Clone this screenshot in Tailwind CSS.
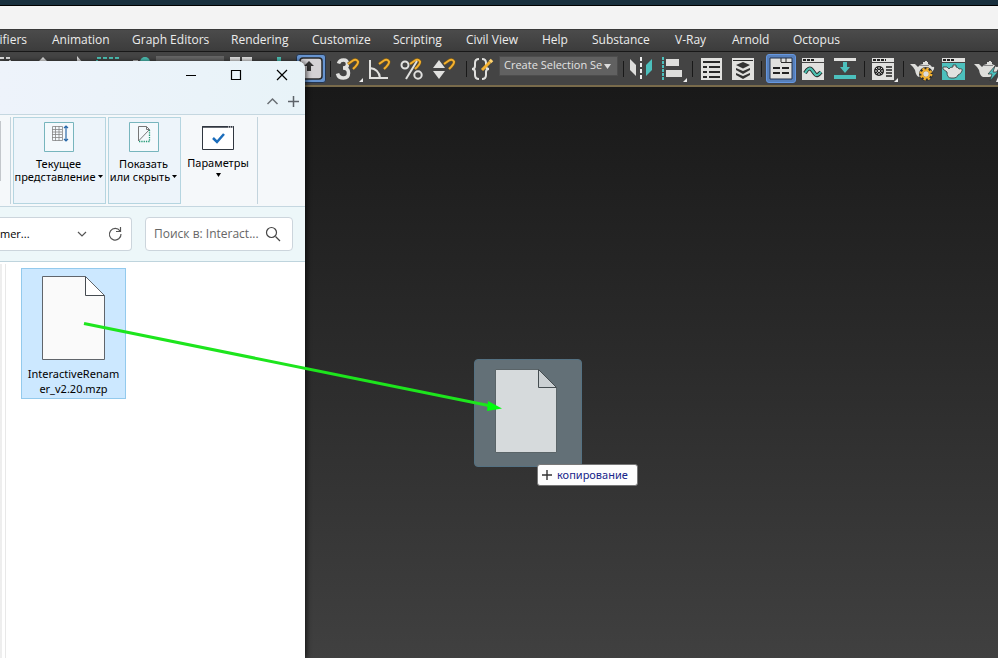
<!DOCTYPE html>
<html lang="ru">
<head>
<meta charset="utf-8">
<title>Interactive Renamer</title>
<script src="https://cdn.jsdelivr.net/npm/@tailwindcss/browser@4"></script>
</head>
<body class="relative flex h-screen flex-col overflow-hidden bg-[#2b2b2b] font-['Noto_Sans','Open_Sans',sans-serif] text-black">
<svg class="absolute size-0" aria-hidden="true">
  <defs>
    <g id="magnet" fill="none"><path d="M1 5 6 1.500Q9-.5 11 2.500Q11.500 5 6 10" stroke="#7a5a18" stroke-width="3"/><path d="M1 5 6 1.500Q9-.5 11 2.500Q11.500 5 6 10" stroke="#f3b02f" stroke-width="2"/></g>
    <g id="pot"><path d="M0 5h5l3 3q2-3 5-3V3h2V2h2v1h1v2q3 1 4 3 3-1 2 2-1 3-4 4-2 4-5 4H9q-3-1-4-7L3 8Z" fill="#dededb"/><path d="M9 6.500h10" stroke="#888"/></g>
  </defs>
</svg>
<header class="shrink-0">
  <div class="h-[6px] border-b border-black bg-[#19303e]"></div>
  <div class="h-[23px] bg-[#f3f3f3]"></div>
  <nav aria-label="Main menu" class="grid h-[23px] grid-cols-[52px_80px_99px_81px_81px_73px_76px_50px_83px_57px_61px_1fr] items-center overflow-hidden border-y border-t-[#393939] border-b-[#181818] bg-linear-to-b from-[#4b4b4b] to-[#3c3c3c] pb-[2px] font-['Open_Sans','Noto_Sans',sans-serif] text-[12px] leading-4 whitespace-nowrap text-[#ececec]">
    <button class="mr-[25px] flex justify-end">Modifiers</button>
    <button class="text-left">Animation</button>
    <button class="text-left">Graph Editors</button>
    <button class="text-left">Rendering</button>
    <button class="text-left">Customize</button>
    <button class="text-left">Scripting</button>
    <button class="text-left">Civil View</button>
    <button class="text-left">Help</button>
    <button class="text-left">Substance</button>
    <button class="text-left">V-Ray</button>
    <button class="text-left">Arnold</button>
    <button class="text-left">Octopus</button>
  </nav>
  <div role="toolbar" aria-label="Main toolbar" class="flex h-[35px] items-center overflow-hidden border-b-2 border-[#796b4b] bg-[#444] *:shrink-0">
    <svg class="h-[33px] w-[296px]" viewBox="0 0 296 33"><path d="M0 6h10v4" fill="none" stroke="#ddd" stroke-width="2" stroke-dasharray="4 2"/><path d="m38 10 5-5 5 5ZM77 4l6 7h-6Z" fill="#ddd"/><path d="M97 12V6h21v6" fill="none" stroke="#4cc0b4" stroke-width="2" stroke-dasharray="4 2"/><circle cx="145" cy="10" r="5" fill="#4cc0b4"/><path d="M133 8h5v3h-5z" fill="#bbb"/><path d="M156 4h68v10h-68z" fill="#656565"/><path d="M230 5h10v8h-10zm12 0h10v8h-10z" fill="#ddd"/><path d="M277 5h4v8h-4z" fill="#4cc0b4"/></svg>
    <button aria-label="Keyboard shortcut override" class="h-[29px] w-[30px] rounded-[3px] border border-[#26364d] bg-[#6794d0]"><svg width="28" height="27" viewBox="0 0 28 27"><rect x="3" y="3" width="22" height="21" rx="3" fill="#d4d2d5" stroke="#292929" stroke-width="1.500"/><path d="m12 6 5 5h-3v5h-4v-5H7Z" fill="#333"/></svg></button>
    <span class="mx-1 h-4 w-px bg-[#191919]"></span>
    <button aria-label="Snaps toggle" class="w-[31px]"><svg width="31" height="28" viewBox="0 0 31 28"><path d="M3.500 8.500Q4.500 5 8.500 5t4 4q0 4-4.500 4 5.500 0 5.500 5t-5 5-6-4.500" fill="none" stroke="#e1e1df" stroke-width="3.500"/><use href="#magnet" x="12" y="4"/><path d="M28 23v4h-4Z" fill="#eee"/></svg></button>
    <button aria-label="Angle snap" class="w-8"><svg width="32" height="28" viewBox="0 0 32 28"><path d="M4 5v18h18M4 13q9 1 10 10" fill="none" stroke="#e1e1df" stroke-width="2"/><use href="#magnet" x="12" y="4"/></svg></button>
    <button aria-label="Percent snap" class="w-8"><svg width="32" height="28" viewBox="0 0 32 28"><use href="#magnet" x="11" y="4"/><path d="M19 6 8 24" stroke="#e1e1df" stroke-width="2"/><circle cx="7" cy="10" r="3.500" fill="none" stroke="#e1e1df" stroke-width="2"/><circle cx="20" cy="20" r="3.700" fill="none" stroke="#e1e1df" stroke-width="2"/></svg></button>
    <button aria-label="Spinner snap" class="w-8"><svg width="32" height="28" viewBox="0 0 32 28"><path d="m9 5 6 8H3Zm0 19 6-8H3Z" fill="#e1e1df"/><use href="#magnet" x="13" y="4"/></svg></button>
    <span class="mx-1 h-4 w-px bg-[#191919]"></span>
    <button aria-label="Edit named selection sets" class="w-7"><svg width="28" height="28" viewBox="0 0 28 28"><path d="M8 4q-4 0-4 4v3q0 3-3 3 3 0 3 3v3q0 4 4 4M11 4q4 0 4 4v3q0 3 3 3-3 0-3 3v3q0 4-4 4" fill="none" stroke="#e1e1df" stroke-width="2"/><path d="m11 15 8-8" stroke="#f3b02f" stroke-width="3"/><path d="m19 7 2-2" stroke="#ffd36e" stroke-width="3.500"/></svg></button>
    <div class="relative mt-1 w-[120px] self-start pr-px">
      <select aria-label="Named selection sets" class="block h-5 w-full appearance-none border border-[#4d4d4d] bg-[#616161] pr-3 pb-[2px] pl-1 font-['Open_Sans','Noto_Sans',sans-serif] text-[11px] leading-4 text-[#e3e3e3]"><option>Create Selection Se</option></select>
      <svg class="pointer-events-none absolute top-2 right-2" width="7" height="5" viewBox="0 0 7 5"><path d="M0 0h7L3.500 5Z" fill="#ddd"/></svg>
    </div>
    <span class="mx-1 h-4 w-px bg-[#191919]"></span>
    <button aria-label="Mirror" class="w-8"><svg width="32" height="28" viewBox="0 0 32 28"><path d="m2 4 6 6v11l-6-6Z" fill="#dededc"/><path d="M13 2v24" stroke="#eee" stroke-width="2" stroke-dasharray="4 2"/><path d="m24 4-6 6v11l6-6Z" fill="#4cc0bd"/></svg></button>
    <button aria-label="Align" class="w-7"><svg width="28" height="28" viewBox="0 0 28 28"><path d="M3 2v23" stroke="#4cc0bd" stroke-width="2" stroke-dasharray="3 1"/><path d="M6 4h13v7H6zm0 11h16v7H6z" fill="#dededc"/><path d="M27 23v4h-4Z" fill="#eee"/></svg></button>
    <span class="mx-1 h-4 w-px bg-[#191919]"></span>
    <button aria-label="Scene explorer" class="w-8"><svg width="32" height="28" viewBox="0 0 32 28"><path d="M4 3h21v22H4z" fill="#e1e1df"/><path d="M6 7h17M6 12h4m2 0h11M6 17h4m2 0h11M6 22h4m2 0h11" stroke="#292929" stroke-width="2"/></svg></button>
    <button aria-label="Layer explorer" class="w-7"><svg width="28" height="28" viewBox="0 0 28 28"><path d="M3 3h22v22H3z" fill="#e1e1df"/><path d="M4 5.500h20" stroke="#292929"/><path d="m14 7 7 3-7 3.500L7 10Zm-7 6 7 3 7-3v2l-7 4-7-4Zm0 5 7 3 7-3v2l-7 4-7-4Z" fill="#333"/></svg></button>
    <span class="mx-1 h-4 w-px bg-[#191919]"></span>
    <button aria-label="Toggle ribbon" class="mr-[2px] h-[29px] w-[30px] rounded-[3px] border border-[#6597e0] bg-[#5780bb]"><svg width="28" height="27" viewBox="0 0 28 27"><path d="M3 3h22v21H3z" fill="#e1e1df" stroke="#24334b"/><path d="M14 7.500h11M14 3v4m5-4v4" stroke="#292929"/><path d="M6 13h7m2 0h7M6 18h7m2 0h7" stroke="#222" stroke-width="2"/></svg></button>
    <button aria-label="Curve editor" class="w-8"><svg width="32" height="28" viewBox="0 0 32 28"><path d="M4 3h22v4H4zm0 5h22v17H4z" fill="#e1e1df"/><path d="M5 5h12" stroke="#222" stroke-width="2" stroke-dasharray="3 1"/><path d="M7 18q4-7 7-3l3 4q2 3 6-2" fill="none" stroke="#222" stroke-width="4"/><path d="M7 18q4-7 7-3l3 4q2 3 6-2" fill="none" stroke="#4cc0b0" stroke-width="2.300"/></svg></button>
    <button aria-label="Schematic view" class="w-[30px]"><svg width="30" height="28" viewBox="0 0 30 28"><path d="M4 4.500h22" stroke="#e1e1df" stroke-width="3"/><path d="M15 7v5" stroke="#4cc0bd" stroke-width="4"/><path d="M10 12h10l-5 6ZM4 20h22v4H4z" fill="#4cc0bd"/></svg></button>
    <span class="mx-1 h-4 w-px bg-[#191919]"></span>
    <button aria-label="Material editor" class="w-[30px]"><svg width="30" height="28" viewBox="0 0 30 28"><path d="M3 3h22v4H3zm0 5h22v17H3z" fill="#e1e1df"/><path d="M4 5h13" stroke="#222" stroke-width="2" stroke-dasharray="3 1"/><circle cx="10" cy="16" r="5" fill="#222"/><path d="m7 13 6 6m0-6-6 6M10 12v8m-4-4h8" stroke="#e1e1df" stroke-dasharray="2 1"/><path d="M17 12h6m-6 3h6m-6 3h6m-6 3h6" stroke="#222" stroke-width="1.500"/><path d="M29 23v4h-4Z" fill="#eee"/></svg></button>
    <span class="mx-1 h-4 w-px bg-[#191919]"></span>
    <button aria-label="Render setup" class="w-8"><svg width="32" height="28" viewBox="0 0 32 28"><use href="#pot" x="2" y="4"/><circle cx="18" cy="19" r="5" fill="#ddd" stroke="#303030" stroke-width="4"/><circle cx="18" cy="19" r="5.200" fill="none" stroke="#f3b02f" stroke-width="2.500" stroke-dasharray="2.200 1.850"/><circle cx="18" cy="19" r="3.700" fill="none" stroke="#f3b02f" stroke-width="2"/></svg></button>
    <button aria-label="Rendered frame window" class="w-8"><svg width="32" height="28" viewBox="0 0 32 28"><path d="M2 3h23v4H2z" fill="#e1e1df"/><path d="M2 8h23v17H2z" fill="#4cc0bd"/><path d="M3 5h12" stroke="#222" stroke-width="2" stroke-dasharray="3 1"/><path d="M3 12h4l2 2q1-2 4-2v-2h3v2q2 0 3 2 4-1 3 2-1 3-4 4-1 3-4 3h-3q-4 0-4-6l-4-3Z" fill="#e1e1df" stroke="#333" stroke-width=".8"/></svg></button>
    <button aria-label="Render production" class="w-8"><svg width="32" height="28" viewBox="0 0 32 28"><use href="#pot" x="2" y="4"/><path d="m23 11-7 8h4l-2 7 8-9h-5Z" fill="#4cc0bd" stroke="#333" stroke-width=".7"/><path d="M26 22v5h-2Z" fill="#eee"/></svg></button>
  </div>
</header>
<main aria-label="Viewport" class="flex-1 bg-linear-to-b from-[#191919] to-[#404040]"></main>

<section aria-label="Проводник" class="absolute top-[61px] bottom-0 left-0 flex w-[305px] flex-col overflow-hidden rounded-tr-lg bg-white shadow-[2px_0_5px_#0009]">
  <div class="bg-linear-to-r from-[#eef3fb] to-[#e8f3f8]">
    <div class="flex h-[28px] items-center justify-end gap-[17px] pr-2">
      <button aria-label="Свернуть" class="size-7"><svg width="28" height="28" viewBox="0 0 28 28"><path d="M7 14.500h10" stroke="#000"/></svg></button>
      <button aria-label="Развернуть" class="size-7"><svg width="28" height="28" viewBox="0 0 28 28"><path d="M7.500 9.500h9v9h-9z" fill="none" stroke="#000" stroke-width="1.200"/></svg></button>
      <button aria-label="Закрыть" class="size-7"><svg width="28" height="28" viewBox="0 0 28 28"><path d="m8 9 10 10m0-10L8 19" stroke="#000" stroke-width="1.200"/></svg></button>
    </div>
    <div class="flex h-[25px] items-center justify-end gap-2 pr-[5px]">
      <button aria-label="Свернуть ленту"><svg width="13" height="13" viewBox="0 0 13 13"><path d="m1.500 9 5-5 5 5" fill="none" stroke="#6b7075" stroke-width="1.500"/></svg></button>
      <button aria-label="Добавить"><svg width="13" height="13" viewBox="0 0 13 13"><path d="M6.500 1v11M1 6.500h11" stroke="#5c6268" stroke-width="1.500"/></svg></button>
    </div>
  </div>
  <div class="flex h-[93px] border-y border-[#c5d7e0] bg-[#f5f8fa] py-[2px] text-[11px] leading-[13px]">
    <div class="mr-[2px] w-[11px] border-r border-[#c3d4dd]"><div class="mt-1 h-[60px] w-px bg-[#c3c7cb]"></div></div>
    <button class="mr-[2px] flex w-[93px] flex-col items-center border border-[#b5d5e0] bg-[#edf4fa] pt-1 pr-[2px] whitespace-nowrap">
      <svg width="30" height="30" viewBox="0 0 30 30"><path d="M.5.5h29v29H.5z" fill="#f4f9fc" stroke="#77b5bd"/><path d="M8.500 4.500h10v14h-10zM8 7.500h10M8 10h10M8 12.500h10M8 15.500h10M11.500 4v15M15 4v15" fill="none" stroke="#858585" stroke-width=".8"/><path d="M22 5v13m-2-12 2-2 2 2m-4 11 2 2 2-2" fill="none" stroke="#2868a8" stroke-width="1.200"/></svg>
      <span class="mt-[5px]">Текущее</span><span class="flex items-center gap-[2px]">представление<svg width="5" height="3" viewBox="0 0 5 3"><path d="M0 0h5L2.500 3Z"/></svg></span>
    </button>
    <button class="flex w-[73px] flex-col items-center border border-[#b5d5e0] bg-[#edf4fa] pt-1 pr-[2px] whitespace-nowrap">
      <svg width="30" height="30" viewBox="0 0 30 30"><path d="M.5.5h29v29H.5z" fill="#f4f9fc" stroke="#77b5bd"/><path d="M9.500 19V4.500h8l3 3L9.500 19M17.500 4.500v3h3" fill="none" stroke="#777"/><path d="M20.500 8v11.500H10" fill="none" stroke="#229a75" stroke-width="1.300" stroke-dasharray="1.300 1"/></svg>
      <span class="mt-[5px]">Показать</span><span class="flex items-center gap-[2px]">или скрыть<svg width="5" height="3" viewBox="0 0 5 3"><path d="M0 0h5L2.500 3Z"/></svg></span>
    </button>
    <button class="flex w-[77px] flex-col items-center border-r border-[#c3d4dd] pt-[9px] pr-[2px] whitespace-nowrap">
      <svg width="32" height="24" viewBox="0 0 32 24"><path d="M.5.5h31v23H.5z" fill="#fff" stroke="#303740"/><path d="M0 1h32" stroke="#303740" stroke-width="1.500"/><path d="M26 1h5" stroke="#fff" stroke-dasharray="1 1"/><path d="m11 12 4 4 7-8" fill="none" stroke="#1c6dbb" stroke-width="2.500"/></svg>
      <span class="mt-[6px]">Параметры</span><svg class="mt-1" width="5" height="4" viewBox="0 0 5 4"><path d="M0 0h5L2.500 4Z"/></svg>
    </button>
  </div>
  <div class="flex h-[55px] items-center gap-[13px] border-b border-[#bed4dd] bg-[#edf7f9] font-['Open_Sans','Noto_Sans',sans-serif] text-[12px] leading-4">
    <div class="flex h-[34px] w-[132px] items-center rounded-r border border-l-0 border-[#ccd5dc] bg-white pr-2">
      <input aria-label="Адрес" value="mer..." class="w-[72px] bg-transparent text-[11px]">
      <button aria-label="Журнал" class="mr-[17px]"><svg width="18" height="18" viewBox="0 0 18 18"><path d="m6 7 4 4 4-4" fill="none" stroke="#555" stroke-width="1.200"/></svg></button>
      <button aria-label="Обновить"><svg width="16" height="16" viewBox="0 0 16 16"><path d="M13 5a5.800 5.800 0 1 0 1 3M13.500 1v4.500H9" fill="none" stroke="#555" stroke-width="1.200"/></svg></button>
    </div>
    <div class="flex h-[34px] w-[148px] items-center rounded border border-[#ccd5dc] bg-white pr-3 pl-2">
      <input aria-label="Поиск" placeholder="Поиск в: Interact..." class="w-[111px] bg-transparent placeholder:text-[#666]">
      <svg class="shrink-0" width="16" height="16" viewBox="0 0 16 16"><circle cx="6.500" cy="6.500" r="5" fill="none" stroke="#454545" stroke-width="1.200"/><path d="m10.500 10.500 4.500 4.500" stroke="#454545" stroke-width="1.300"/></svg>
    </div>
  </div>
  <div class="flex flex-1">
    <div class="mt-[2px] w-[6px] border-r border-[#e8e8e8] bg-linear-to-r from-[#eee] from-50% to-white to-50%"></div>
    <button class="mt-[6px] ml-[15px] flex h-[131px] w-[105px] flex-col items-center border border-[#93caed] bg-[#cce8ff] pt-[7px] text-[11px] leading-[15px]">
      <svg width="64" height="84" viewBox="0 0 64 84"><path d="M.5.5h43l19 19v64H.5z" fill="#fafafa" stroke="#60656b"/><path d="M43.500.5v19h19" fill="#fff" stroke="#454b51"/><path d="m43.500.5 19 19" stroke="#60656b"/></svg>
      <span class="mt-[6px]">InteractiveRenam<br>er_v2.20.mzp</span>
    </button>
  </div>
</section>

<div class="absolute top-[359px] left-[474px] flex h-[108px] w-[108px] justify-center rounded-[4px] border border-[#547182] bg-[#637077] pt-[9px] pr-1">
  <svg width="62" height="84" viewBox="0 0 62 84"><path d="M.5.5h43l18 18v65H.5z" fill="#d6dadc" stroke="#5a6468"/><path d="M43.500.5v18h18Z" fill="#cbd0d3" stroke="#454d51"/></svg>
</div>
<div class="absolute top-[464px] left-[537px] flex h-[22px] w-[101px] items-center gap-[5px] rounded-[3px] border border-[#777] bg-[#fdfdfd] pl-1 text-[11px] leading-4 text-[#17258a]"><svg width="10" height="10" viewBox="0 0 10 10"><path d="M5 0v10M0 5h10" stroke="#333" stroke-width="1.400"/></svg>копирование</div>
<svg class="pointer-events-none absolute top-[310px] left-[80px]" width="425" height="110" viewBox="0 0 425 110"><path d="M4 13.500 411 96" stroke="#1de51d" stroke-width="3"/><path d="m408 91 14 7.500-15 2.500Z" fill="#00fc0c"/></svg>
</body>
</html>
